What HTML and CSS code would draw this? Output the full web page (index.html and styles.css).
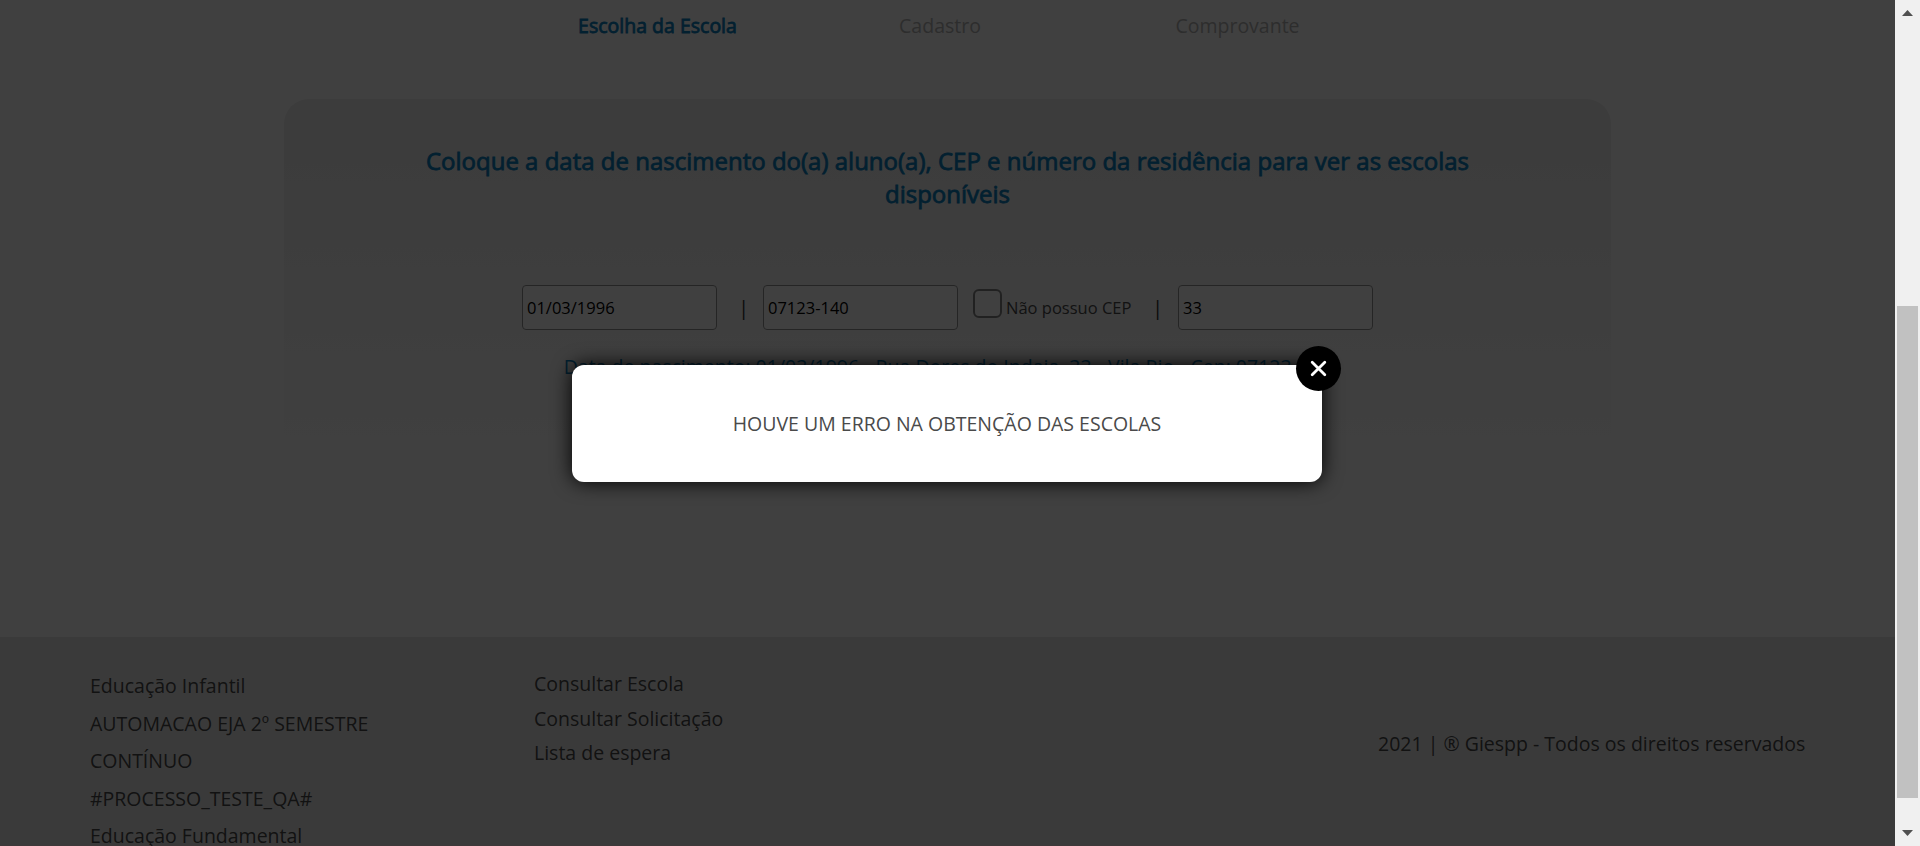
FILE: index.html
```html
<!DOCTYPE html>
<html lang="pt-BR">
<head>
<meta charset="utf-8">
<title>Escolha da Escola</title>
<link rel="stylesheet" href="styles.css">
</head>
<body>
<div class="window">
  <div class="page">
    <main class="main">
      <nav class="steps">
        <span class="step step-active">Escolha da Escola</span>
        <span class="step">Cadastro</span>
        <span class="step">Comprovante</span>
      </nav>
      <section class="card">
        <h1 class="title">Coloque a data de nascimento do(a) aluno(a), CEP e número da residência para ver as escolas disponíveis</h1>
        <form class="form">
          <input class="field" type="text" value="01/03/1996" aria-label="Data de nascimento">
          <span class="sep sep-birth">|</span>
          <input class="field" type="text" value="07123-140" aria-label="CEP">
          <label class="check"><span class="box"></span><span class="check-text">Não possuo CEP</span></label>
          <span class="sep sep-cep">|</span>
          <input class="field" type="text" value="33" aria-label="Número">
        </form>
        <p class="summary">Data de nascimento: 01/03/1996 - Rua Dores do Indaia, 33 - Vila Rio - Cep: 07123-140</p>
      </section>
    </main>
    <footer class="footer">
      <ul class="links processes">
        <li>Educação Infantil</li>
        <li>AUTOMACAO EJA 2º SEMESTRE</li>
        <li>CONTÍNUO</li>
        <li>#PROCESSO_TESTE_QA#</li>
        <li>Educação Fundamental</li>
      </ul>
      <ul class="links queries">
        <li>Consultar Escola</li>
        <li>Consultar Solicitação</li>
        <li>Lista de espera</li>
      </ul>
      <p class="copyright">2021 | ® Giespp - Todos os direitos reservados</p>
    </footer>
    <div class="overlay">
      <div class="modal">
        <p class="message">HOUVE UM ERRO NA OBTENÇÃO DAS ESCOLAS</p>
        <button class="close" type="button" aria-label="Fechar">
          <svg width="17" height="17" viewBox="0 0 17 17"><path d="M2.2 2.2 14.8 14.8M14.8 2.2 2.2 14.8" stroke="#fff" stroke-width="2.8" stroke-linecap="round"/></svg>
        </button>
      </div>
    </div>
  </div>
  <div class="scrollbar">
    <svg class="arrow" width="11" height="6" viewBox="0 0 11 6"><path d="M0 6 5.5 0 11 6z"/></svg>
    <div class="thumb"></div>
    <svg class="arrow" width="11" height="6" viewBox="0 0 11 6"><path d="M0 0h11L5.5 6z"/></svg>
  </div>
</div>
</body>
</html>
```
FILE: styles.css
```css
* { box-sizing: border-box; margin: 0; padding: 0; }

body {
  font-family: "Open Sans", sans-serif;
  font-size: 19.5px;
  line-height: 27px;
  overflow: hidden;
}

.window { display: flex; height: 846px; }

.page {
  position: relative;
  display: flex;
  flex-direction: column;
  width: 1895px;
  height: 846px;
  background: #fff;
  overflow: hidden;
}

.main { height: 637px; flex: none; }

.steps {
  display: grid;
  grid-template-columns: 285px 280px 315px;
  padding: 12px 0 0 515px;
  height: 99px;
}
.step { color: #b4b4b4; text-align: center; }
.step-active { color: #0a80be; -webkit-text-stroke: 0.8px #0a80be; }

.card {
  width: 1327px;
  height: 380px;
  margin: 0 auto;
  padding-top: 45px;
  border-radius: 25px;
  background: linear-gradient(#ededed, #fff);
}

.title {
  width: 1120px;
  margin: 0 auto;
  color: #0a80be;
  font-size: 24px;
  font-weight: 400;
  line-height: 33px;
  text-align: center;
  -webkit-text-stroke: 0.8px #0a80be;
}

.form { display: flex; padding: 75px 0 0 238px; }

.field {
  width: 195px;
  height: 45px;
  padding: 0 4px;
  border: 1px solid #959595;
  border-radius: 4px;
  background: #fff;
  color: #000;
  font: 16.5px "Open Sans", sans-serif;
}

.sep { flex: none; line-height: 45px; text-align: center; color: #303030; }
.sep-birth { width: 46px; padding-left: 7px; }
.sep-cep { width: 47px; padding-left: 6px; }

.check { display: flex; width: 173px; flex: none; padding-left: 15px; }
.box {
  flex: none;
  width: 29px;
  height: 29px;
  margin-top: 4px;
  border: 2px solid #858585;
  border-radius: 6px;
  background: #fff;
}
.check-text {
  margin-left: 4px;
  color: #4a4a4a;
  font-size: 16.5px;
  line-height: 46px;
  white-space: nowrap;
}

.summary {
  margin-top: 22px;
  color: #0a80be;
  text-align: center;
  white-space: nowrap;
}

.footer {
  display: flex;
  flex: 1;
  min-height: 0;
  padding-left: 90px;
  background: #e8e8e8;
  border-bottom: 1px solid #f6dde2;
  color: #4a4a4a;
}
.links { list-style: none; flex: none; white-space: nowrap; }
.processes { width: 444px; padding-top: 30px; line-height: 37.5px; }
.queries { width: 844px; padding-top: 30px; line-height: 34.5px; }
.copyright { padding-top: 93px; white-space: nowrap; }

.overlay {
  position: absolute;
  inset: 0;
  display: flex;
  align-items: center;
  justify-content: center;
  padding-right: 1px;
  background: rgba(0, 0, 0, 0.75);
}

.modal {
  position: relative;
  display: flex;
  align-items: center;
  justify-content: center;
  width: 750px;
  height: 117px;
  border-radius: 12px;
  background: #fff;
  box-shadow: 0 0 20px #000;
}
.message { color: #4a4a4a; white-space: nowrap; }

.close {
  position: absolute;
  top: -19px;
  right: -19px;
  display: flex;
  align-items: center;
  justify-content: center;
  width: 45px;
  height: 45px;
  border: 0;
  border-radius: 50%;
  background: #000;
}

.scrollbar {
  display: flex;
  flex-direction: column;
  align-items: center;
  justify-content: space-between;
  width: 25px;
  padding: 10px 0;
  background: #f0f0f0;
}
.thumb { width: 21px; height: 492px; margin-top: 258px; background: #c1c1c1; }
.arrow { fill: #505050; }
```
